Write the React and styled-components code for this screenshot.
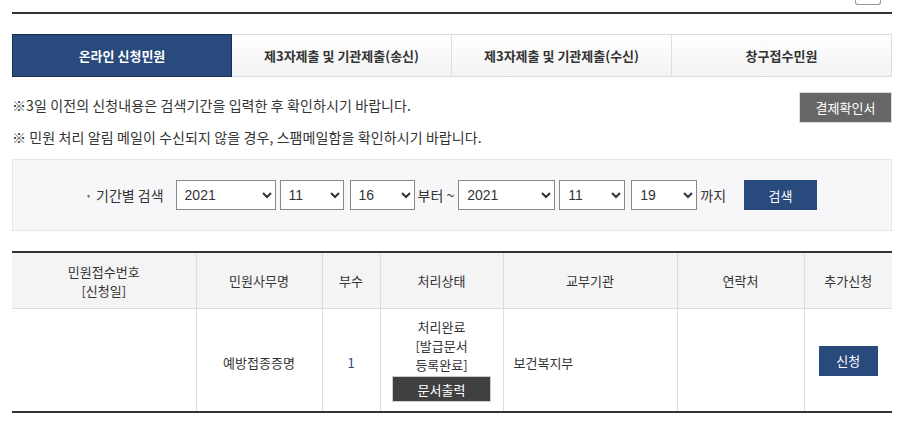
import React from "react"
import styled, { createGlobalStyle } from "styled-components"

const GlobalStyle = createGlobalStyle`
  body {
    margin: 0;
    background: #fff;
    font-family: "Noto Sans CJK KR", "Liberation Sans", sans-serif;
    color: #333;
  }
`

const Page = styled.div`
  width: 880px;
  padding: 0 13px 0 12px;
`

const TopBar = styled.div`
  display: flex;
  justify-content: flex-end;
  height: 12px;
  border-bottom: 2px solid #333;
`

const TopButton = styled.span`
  width: 24px;
  height: 4px;
  margin-right: 11px;
  border: 1px solid #999;
  border-top: none;
  border-radius: 0 0 3px 3px;
`

const Tabs = styled.ul`
  display: grid;
  grid-template-columns: repeat(4, 1fr);
  margin: 20px 0 0;
  padding: 0;
  list-style: none;
`

const Tab = styled.li`
  height: 41px;
  display: flex;
  align-items: center;
  justify-content: center;
  font-size: 13px;
  font-weight: bold;
  color: ${p => (p.$active ? "#fff" : "#333")};
  background: ${p => (p.$active ? "#284a7c" : "linear-gradient(#fff, #f3f3f3)")};
  border: 1px solid ${p => (p.$active ? "#1a2f50" : "#ddd")};
  border-left-width: ${p => (p.$first || p.$active ? "1px" : "0")};
`

const NoticeArea = styled.div`
  display: flex;
  justify-content: space-between;
  align-items: flex-start;
  margin-top: 15px;
`

const NoticeList = styled.div`
  display: flex;
  flex-direction: column;
  gap: 13px;
  padding-top: 4px;
  font-size: 14px;
  line-height: 19px;
  letter-spacing: 0.1px;
`

const GreyButton = styled.button`
  width: 93px;
  height: 31px;
  border: 1px solid #ddd;
  background: #666;
  color: #fff;
  font-family: inherit;
  font-size: 13px;
  padding: 0;
`

const SearchBox = styled.div`
  margin-top: 12px;
  height: 70px;
  background: #f7f7f9;
  border: 1px solid #e6e6ea;
  display: flex;
  align-items: center;
  justify-content: center;
  font-size: 14px;
`

const SearchLabel = styled.span`
  margin-right: 12px;
  &::before {
    content: "•";
    font-size: 9px;
    color: #666;
    margin-right: 6px;
    vertical-align: 2px;
  }
`

const Select = styled.select`
  width: ${p => p.$w}px;
  height: 30px;
  margin-right: ${p => p.$mr || 0}px;
  border: 1px solid #888;
  background: #fff;
  color: #333;
  font-family: "Liberation Sans", sans-serif;
  font-size: 14px;
  padding: 0 4px;
`

const Word = styled.span`
  margin: 0 ${p => p.$mr || 4}px 0 3px;
`

const BlueButton = styled.button`
  width: ${p => p.$w}px;
  height: 30px;
  border: none;
  background: #284a7c;
  color: #fff;
  font-family: inherit;
  font-size: 13px;
  padding: 0;
`

const Table = styled.table`
  width: 100%;
  margin-top: 20px;
  table-layout: fixed;
  border-collapse: collapse;
  border-top: 2px solid #333;
  border-bottom: 2px solid #333;
  font-size: 13px;
  line-height: 19px;
`

const Th = styled.th`
  height: 55px;
  padding: 0;
  background: #f4f4f4;
  font-weight: normal;
  border-bottom: 1px solid #ddd;
  border-left: 1px solid #ddd;
  &:first-child {
    border-left: none;
  }
`

const Row = styled.tr`
  height: 103px;
`

const Td = styled.td`
  border-left: 1px solid #ddd;
  text-align: ${p => p.$align || "center"};
  padding: ${p => p.$top ?? 6}px ${p => (p.$align === "left" ? 10 : 0)}px 0;
  color: ${p => p.$color || "#333"};
  &:first-child {
    border-left: none;
  }
`

const PrintButton = styled.button`
  display: block;
  width: 99px;
  height: 26px;
  margin: 2px auto 0;
  border: 1px solid #ccc;
  background: #404040;
  color: #fff;
  font-family: inherit;
  font-size: 13px;
  padding: 0;
`

const range = (a, b) => Array.from({ length: b - a + 1 }, (_, i) => a + i)
const pad = n => (n < 10 ? `0${n}` : `${n}`)

const DateSelects = ({ day, widths }) => (
  <>
    <Select $w={widths[0]} $mr={4} defaultValue="2021">
      {range(2015, 2021).map(y => (
        <option key={y}>{y}</option>
      ))}
    </Select>
    <Select $w={widths[1]} $mr={6} defaultValue="11">
      {range(1, 12).map(m => (
        <option key={m}>{pad(m)}</option>
      ))}
    </Select>
    <Select $w={widths[2]} defaultValue={day}>
      {range(1, 31).map(d => (
        <option key={d}>{pad(d)}</option>
      ))}
    </Select>
  </>
)

const columns = [184, 126, 58, 123, 174, 127, 88]

export default function App() {
  const tabs = ["온라인 신청민원", "제3자제출 및 기관제출(송신)", "제3자제출 및 기관제출(수신)", "창구접수민원"]
  return (
    <Page>
      <GlobalStyle />
      <TopBar>
        <TopButton />
      </TopBar>

      <Tabs>
        {tabs.map((t, i) => (
          <Tab key={t} $active={i === 0} $first={i === 0}>
            {t}
          </Tab>
        ))}
      </Tabs>

      <NoticeArea>
        <NoticeList>
          <div>※3일 이전의 신청내용은 검색기간을 입력한 후 확인하시기 바랍니다.</div>
          <div>※ 민원 처리 알림 메일이 수신되지 않을 경우, 스팸메일함을 확인하시기 바랍니다.</div>
        </NoticeList>
        <GreyButton>결제확인서</GreyButton>
      </NoticeArea>

      <SearchBox>
        <SearchLabel>기간별 검색</SearchLabel>
        <DateSelects day="16" widths={[100, 64, 65]} />
        <Word>부터 ~</Word>
        <DateSelects day="19" widths={[97, 66, 66]} />
        <Word $mr={18}>까지</Word>
        <BlueButton $w={73}>검색</BlueButton>
      </SearchBox>

      <Table>
        <colgroup>
          {columns.map((w, i) => (
            <col key={i} style={{ width: w }} />
          ))}
        </colgroup>
        <thead>
          <tr>
            <Th>
              민원접수번호
              <br />
              [신청일]
            </Th>
            <Th>민원사무명</Th>
            <Th>부수</Th>
            <Th>처리상태</Th>
            <Th>교부기관</Th>
            <Th>연락처</Th>
            <Th>추가신청</Th>
          </tr>
        </thead>
        <tbody>
          <Row>
            <Td />
            <Td>예방접종증명</Td>
            <Td $color="#2a4f8a">1</Td>
            <Td $top={0}>
              처리완료
              <br />
              [발급문서
              <br />
              등록완료]
              <PrintButton>문서출력</PrintButton>
            </Td>
            <Td $align="left">보건복지부</Td>
            <Td />
            <Td $top={2}>
              <BlueButton $w={59}>신청</BlueButton>
            </Td>
          </Row>
        </tbody>
      </Table>
    </Page>
  )
}
